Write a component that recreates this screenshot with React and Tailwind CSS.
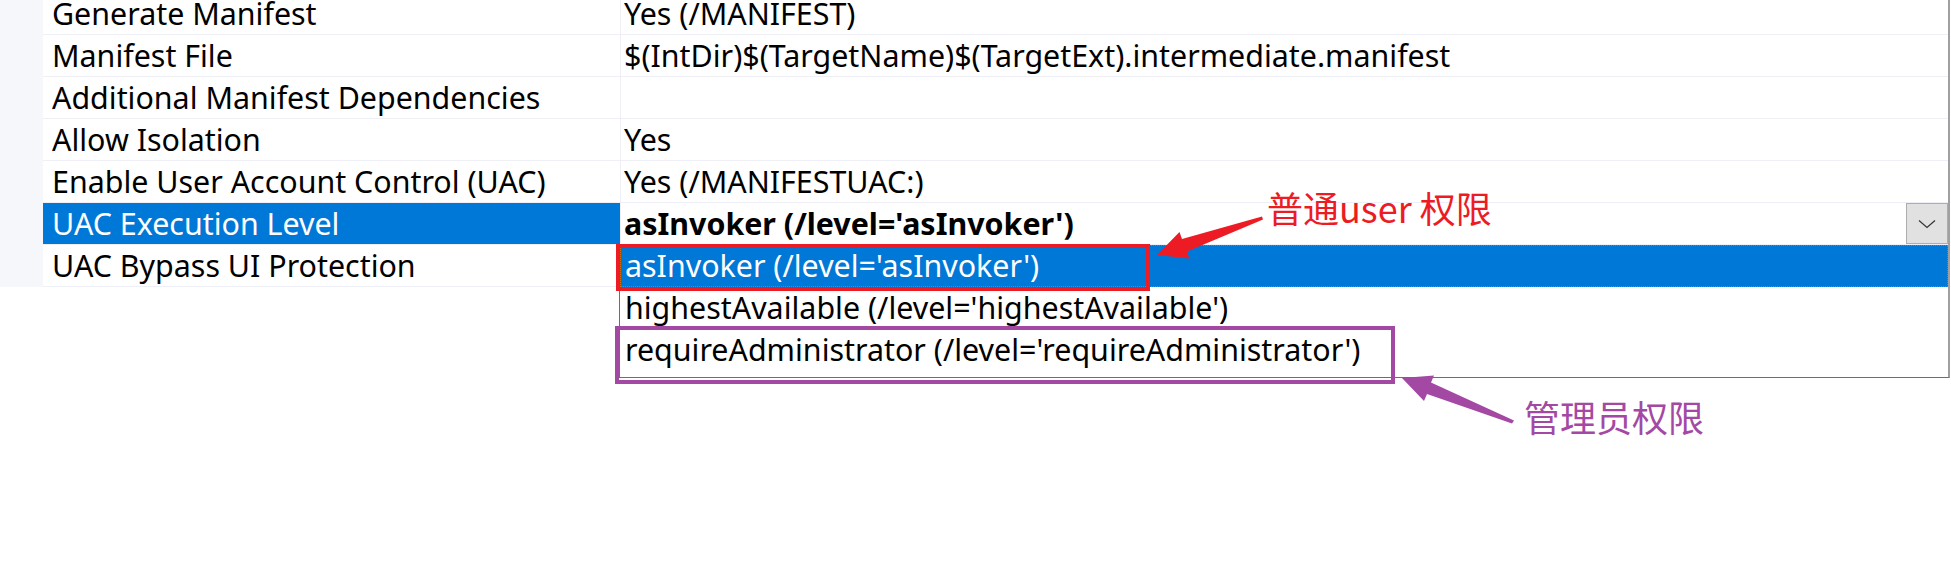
import React from 'react';

const rows = [
  { name: 'Generate Manifest', value: 'Yes (/MANIFEST)' },
  { name: 'Manifest File', value: '$(IntDir)$(TargetName)$(TargetExt).intermediate.manifest' },
  { name: 'Additional Manifest Dependencies', value: '' },
  { name: 'Allow Isolation', value: 'Yes' },
  { name: 'Enable User Account Control (UAC)', value: 'Yes (/MANIFESTUAC:)' },
  { name: 'UAC Execution Level', value: "asInvoker (/level='asInvoker')", selected: true },
  { name: 'UAC Bypass UI Protection', value: '' },
];

const options = [
  "asInvoker (/level='asInvoker')",
  "highestAvailable (/level='highestAvailable')",
  "requireAdministrator (/level='requireAdministrator')",
];

const PropertyRow = ({ row }) => (
  <div className="flex h-[42px] border-b border-[#efeff7]">
    <div className={`w-[577px] pl-[9px] leading-[41px] whitespace-nowrap ${row.selected ? 'bg-[#0078d7] text-white' : 'text-black'}`}>
      {row.name}
    </div>
    <div className="flex-1 flex border-l border-[#efeff7] pl-[3px] leading-[41px] whitespace-nowrap">
      <span className={row.selected ? 'font-bold flex-1' : 'flex-1'}>{row.value}</span>
      {row.selected && (
        <div className="w-[42px] h-[41px] bg-[#e1e1e1] border border-[#adadad] flex items-center justify-center">
          <svg width="18" height="10" viewBox="0 0 18 10">
            <path d="M1 1.5 L9 8.5 L17 1.5" fill="none" stroke="#333" strokeWidth="1.2" />
          </svg>
        </div>
      )}
    </div>
  </div>
);

export default function App() {
  return (
    <div className="relative w-[1951px] h-[565px] bg-white overflow-hidden text-[30.4px] text-black font-['Noto_Sans','Noto_Sans_CJK_SC',sans-serif]">
      <div className="mt-[-7px] w-[1950px] flex border-r-2 border-[#a0a0a0]">
        <div className="w-[43px] bg-[#f5f7fb]" />
        <div className="flex-1">
          {rows.map(row => <PropertyRow key={row.name} row={row} />)}
        </div>
      </div>

      {/* dropdown list */}
      <div className="absolute left-[619px] top-[245px] w-[1331px] h-[133px] bg-white border-l border-b border-[#6e6e6e] border-r-2 border-r-[#a0a0a0]">
        {options.map((opt, i) => (
          <div
            key={opt}
            className={`h-[42px] pl-[4px] leading-[40px] whitespace-nowrap ${i === 0 ? 'bg-[#0078d7] text-white border border-dotted border-[#c87010]' : 'text-black border border-transparent'}`}
          >
            {opt}
          </div>
        ))}
      </div>

      {/* annotations */}
      <div className="absolute left-[616px] top-[244px] w-[534px] h-[47px] border-[4px] border-[#ed1c24]" />
      <div className="absolute left-[615px] top-[326px] w-[780px] h-[58px] border-[4px] border-[#a349a4]" />

      <svg className="absolute left-0 top-0" width="1951" height="565">
        <polygon
          points="1262,216.5 1182,239 1179.5,232 1157,255 1189.5,258.5 1187,251.5 1263,219.5"
          fill="#ed1c24"
        />
        <polygon
          points="1514,420.5 1431,382.5 1434,375.5 1402,378 1424,401 1427,394 1512,423.5"
          fill="#a349a4"
        />
      </svg>

      <div className="absolute left-[1267px] top-[189px] text-[36px] leading-none text-[#ed1c24] whitespace-nowrap font-['Noto_Sans_CJK_SC',sans-serif]">
        普通user 权限
      </div>
      <div className="absolute left-[1524px] top-[398px] text-[36px] leading-none text-[#a349a4] whitespace-nowrap font-['Noto_Sans_CJK_SC',sans-serif]">
        管理员权限
      </div>
    </div>
  );
}
